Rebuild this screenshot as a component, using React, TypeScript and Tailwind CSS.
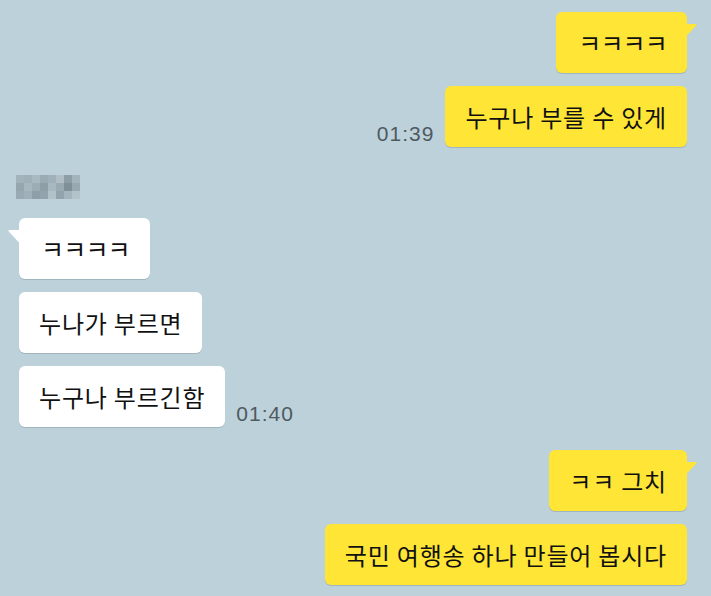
const FONT = "font-['Apple_SD_Gothic_Neo','Noto_Sans_CJK_KR',sans-serif]";

const MOSAIC = [
  ["#a3b3bb", "#9fb0b8", "#a9b9c1", "#9aabb3", "#a1b1b9", "#b0bec5", "#8e9ea7", "#a4b4bc"],
  ["#95a6ae", "#a7b7bf", "#9cadb5", "#8d9ea6", "#a8b8c0", "#9aaab2", "#7f9099", "#98a8b0"],
  ["#9aaab2", "#a0b0b8", "#8f9fa8", "#93a3ab", "#b2c2c9", "#92a3ab", "#a5b5bd", "#b3c3ca"],
];

const Tail = ({ side, color }: { side: "left" | "right"; color: string }) => (
  <svg
    width="13"
    height="14"
    viewBox="0 0 13 14"
    className={side === "right" ? "absolute -right-[11px] top-[11px]" : "absolute -left-[12px] top-[11px] -scale-x-100"}
  >
    <path d="M0 1 L10.5 1 Q12.5 1 11.3 2.6 L1 13.5 L0 13.5 Z" fill={color} />
  </svg>
);

const Bubble = ({
  text,
  me,
  tail,
  small,
}: {
  text: string;
  me?: boolean;
  tail?: boolean;
  small?: boolean;
}) => (
  <div
    className={`relative h-[61px] flex items-center px-[20px] rounded-[6px] shadow-[0_1px_0_rgba(80,100,110,0.25)] ${
      me ? "bg-[#ffe535]" : "bg-white"
    }`}
  >
    {tail && <Tail side={me ? "right" : "left"} color={me ? "#ffe535" : "#ffffff"} />}
    <span
      className={`${FONT} text-[#111] ${
        small ? "text-[25px] tracking-[-0.8px] pl-[2px]" : "text-[24px] tracking-[0.8px]"
      } leading-none whitespace-nowrap`}
    >
      {text}
    </span>
  </div>
);

const Time = ({ t }: { t: string }) => (
  <span className="font-['Liberation_Sans',Arial,sans-serif] text-[21px] leading-none text-[#4d5a61] tracking-[1px] pb-[3px]">
    {t}
  </span>
);

export default function App() {
  return (
    <div className="w-[711px] h-[596px] bg-[#bdd1da] overflow-hidden pt-[12px] pl-[19px] pr-[24px]">
      <div className="flex flex-col items-end gap-[13px]">
        <Bubble text="ㅋㅋㅋㅋ" me tail small />
        <div className="flex items-end gap-[11px]">
          <Time t="01:39" />
          <Bubble text="누구나 부를 수 있게" me />
        </div>
      </div>

      <div className="mt-[28px] ml-[-3px] grid grid-cols-8 w-[64px]">
        {MOSAIC.flat().map((c, i) => (
          <div key={i} className="h-[8px]" style={{ backgroundColor: c }} />
        ))}
      </div>

      <div className="mt-[19px] flex flex-col items-start gap-[13px]">
        <Bubble text="ㅋㅋㅋㅋ" tail small />
        <Bubble text="누나가 부르면" />
        <div className="flex items-end gap-[11px]">
          <Bubble text="누구나 부르긴함" />
          <Time t="01:40" />
        </div>
      </div>

      <div className="mt-[23px] flex flex-col items-end gap-[13px]">
        <Bubble text="ㅋㅋ 그치" me tail />
        <Bubble text="국민 여행송 하나 만들어 봅시다" me />
      </div>
    </div>
  );
}
